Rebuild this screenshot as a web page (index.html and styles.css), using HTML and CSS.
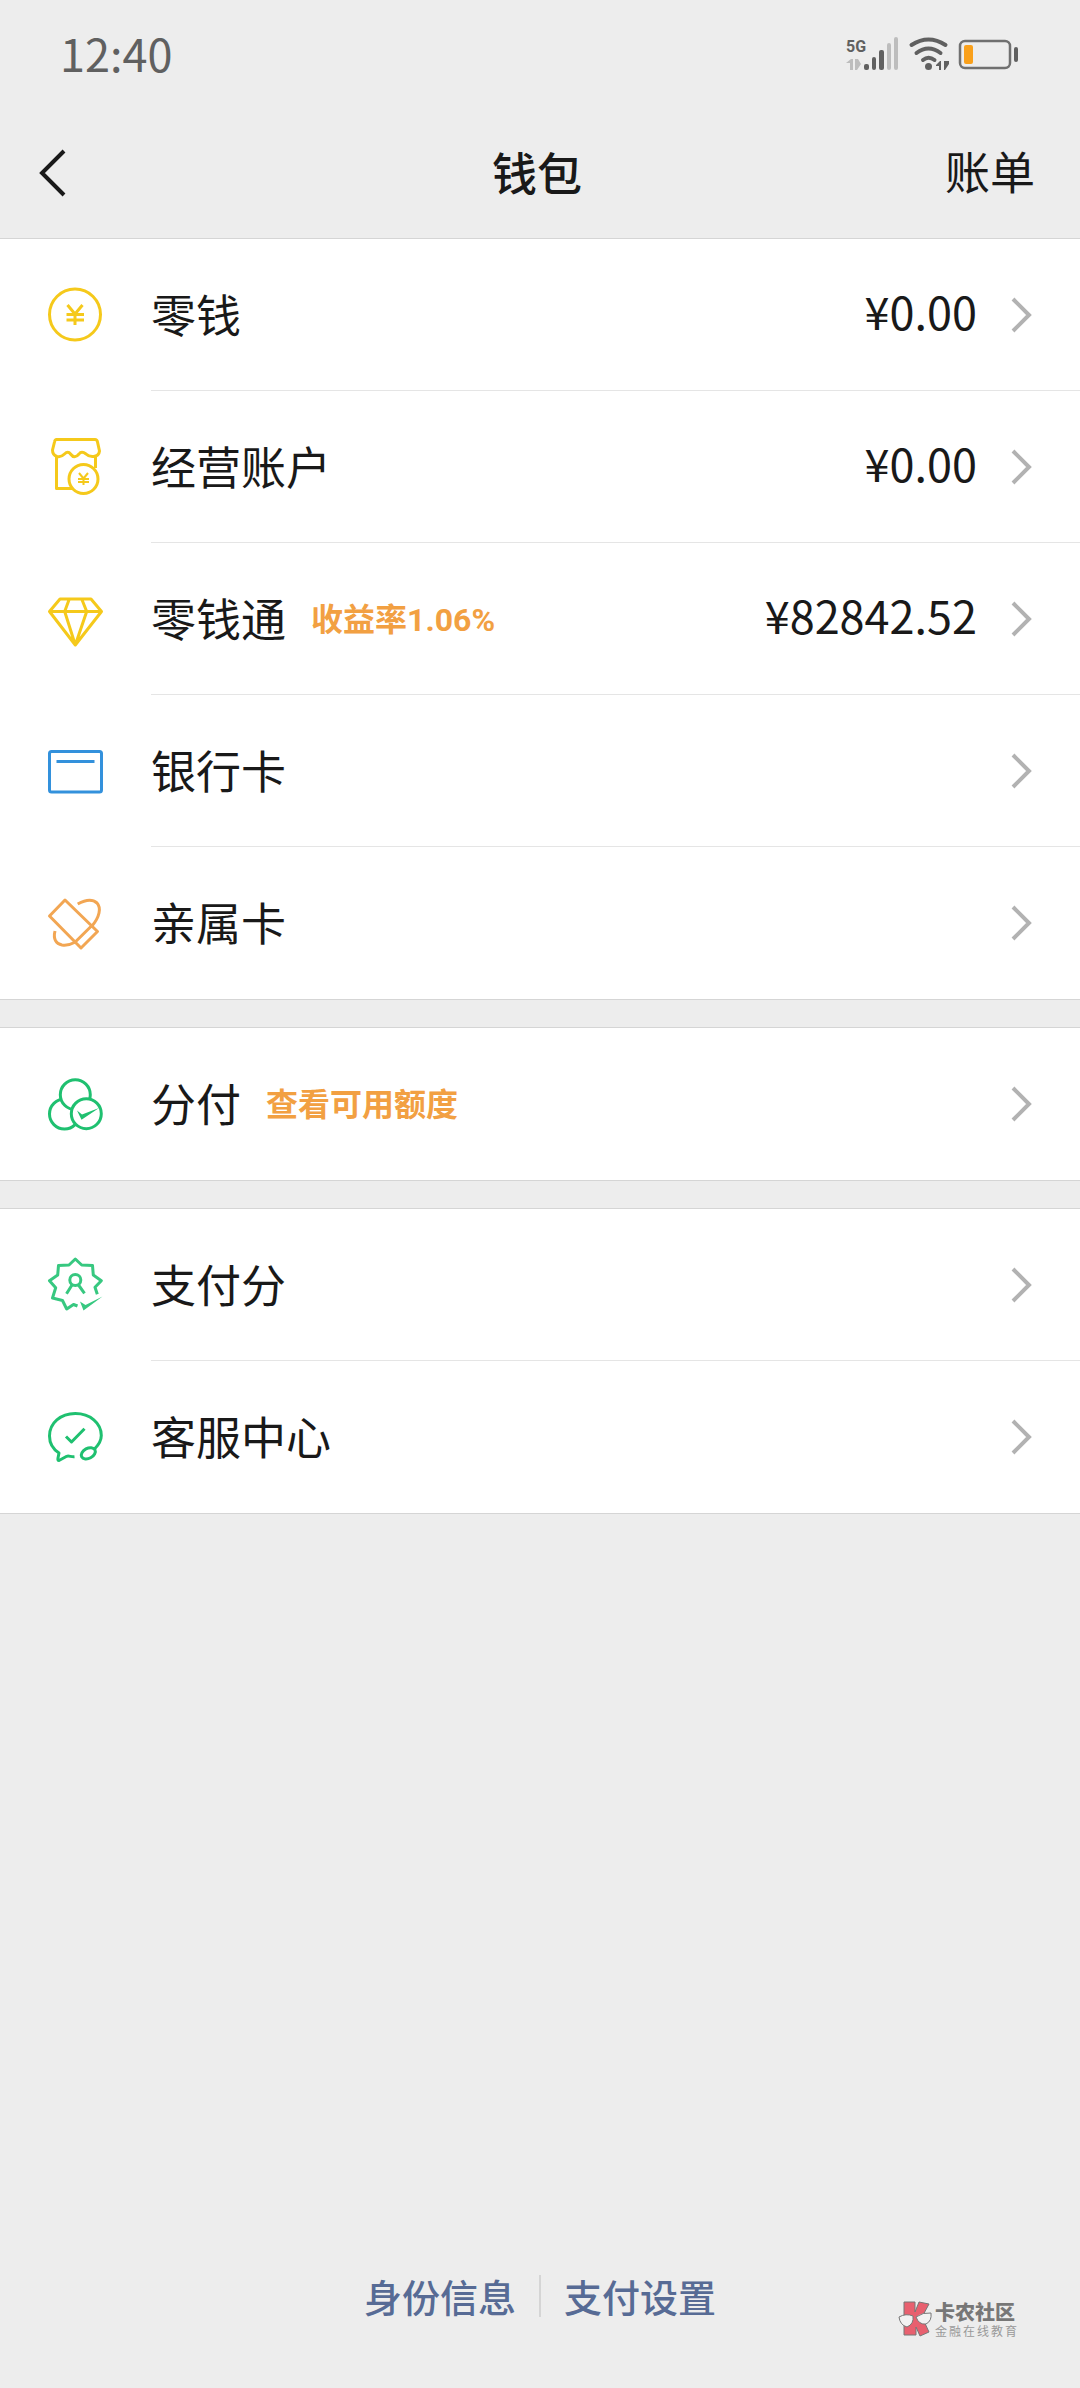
FILE: index.html
```html
<!DOCTYPE html>
<html lang="zh-CN">
<head>
  <meta charset="UTF-8" />
  <meta name="viewport" content="width=device-width, initial-scale=1.0"/>
  <title>钱包</title>
  <link rel="stylesheet" href="styles.css">
</head>
<body>
  <div class="status-bar">
    <span class="time">12:40</span>
    <svg class="status-icons" viewBox="0 0 174 38" aria-hidden="true">
      <text class="network" x="0" y="17">5G</text>
      <g fill="#bdbdbd">
        <path d="M0 28 L5 24 H7 V35 H4 V28 Z M9 24 H12 L15 29 L11 35 H9 Z"/>
        <rect x="41" y="8" width="4" height="27" rx="2"/>
        <rect x="48" y="2" width="4" height="33" rx="2"/>
      </g>
      <g fill="#606060">
        <rect x="18" y="29" width="5" height="6" rx="2"/>
        <rect x="26" y="22" width="4" height="13" rx="2"/>
        <rect x="33" y="15" width="5" height="20" rx="2"/>
        <circle cx="82.500" cy="31.500" r="3.500"/>
        <path d="M90 30 L94 26 H95 V35 H93 V31 H90 Z M98 26 H103 V29 L99 35 H98 Z"/>
        <rect x="168" y="12" width="4" height="15" rx="2"/>
      </g>
      <g fill="none" stroke="#606060" stroke-width="4" stroke-linecap="round">
        <path d="M65.500 10 Q82.500 -1 99.500 10"/>
        <path d="M70.500 18 Q82.500 9 94.500 18"/>
        <path d="M77 25 Q82.500 20.500 88.500 25"/>
      </g>
      <rect x="114" y="6" width="50" height="27" rx="5" fill="none" stroke="#707070" stroke-width="2.500"/>
      <rect x="118" y="10" width="9" height="19" rx="2" fill="#f9a01b"/>
    </svg>
  </div>

  <header class="nav">
    <button class="back" aria-label="返回">
      <svg viewBox="0 0 28 48"><path d="M25 2 L3 24 L25 46"/></svg>
    </button>
    <h1>钱包</h1>
    <a class="bill" href="#">账单</a>
  </header>

  <main>
    <ul class="section">
      <li>
        <a class="row yellow" href="#">
          <svg class="icon" viewBox="0 0 64 64">
            <circle cx="32" cy="31.500" r="25.500"/>
            <path d="M24.500 22 L32 31 L39.500 22 M32 31 V42 M23.500 31.500 H41 M23.500 37 H41"/>
          </svg>
          <span class="body">
            <span class="name">零钱</span>
            <span class="amount">¥0.00</span>
            <svg class="arrow" viewBox="0 0 24 40"><path d="M4 4 L20 20 L4 36"/></svg>
          </span>
        </a>
      </li>
      <li>
        <a class="row yellow" href="#">
          <svg class="icon" viewBox="0 0 64 64">
            <path d="M13.500 4.500 H52 Q54 4.500 54.500 7 L56.500 16 Q56 21 50.500 21.500 Q46 22 43 19 Q38.500 15.500 36 19 Q31.500 24.500 27.500 19 Q25 15.500 21.500 19 Q18 22.500 14 21.500 Q9.500 20 9.500 15 L11.500 7 Q12 4.500 13.500 4.500 Z"/>
            <path d="M13.500 22 V53.500 H29 M52.500 22 V33"/>
            <circle cx="40.500" cy="44" r="14.500" fill="#fff"/>
            <path class="thin" d="M36 38 L40.500 43.500 L45 38 M40.500 43.500 V50 M35 44 H46 M35 47 H46"/>
          </svg>
          <span class="body">
            <span class="name">经营账户</span>
            <span class="amount">¥0.00</span>
            <svg class="arrow" viewBox="0 0 24 40"><path d="M4 4 L20 20 L4 36"/></svg>
          </span>
        </a>
      </li>
      <li>
        <a class="row yellow" href="#">
          <svg class="icon" viewBox="0 0 64 64">
            <path d="M17 12 H48 L58.500 24.500 L32.300 58 L6.500 24.500 Z M6.500 24.500 H58.500 M26.300 12 L21.700 24.500 L32.300 58 L43.700 24.500 L38.700 12"/>
          </svg>
          <span class="body">
            <span class="name">零钱通</span>
            <span class="tip">收益率1.06%</span>
            <span class="amount">¥82842.52</span>
            <svg class="arrow" viewBox="0 0 24 40"><path d="M4 4 L20 20 L4 36"/></svg>
          </span>
        </a>
      </li>
      <li>
        <a class="row blue" href="#">
          <svg class="icon" viewBox="0 0 64 64">
            <rect x="6.500" y="12.500" width="52" height="40.500" rx="2"/>
            <path d="M13.500 22.500 H51.500"/>
          </svg>
          <span class="body">
            <span class="name">银行卡</span>
            <svg class="arrow" viewBox="0 0 24 40"><path d="M4 4 L20 20 L4 36"/></svg>
          </span>
        </a>
      </li>
      <li>
        <a class="row orange" href="#">
          <svg class="icon" viewBox="0 0 64 64">
            <path d="M22 9 L6.500 25 L38 57 L54.500 40.500 Z M48.700 34.700 L32 51.300"/>
            <path d="M34.700 13 C43 8.500 50 8.500 54 12 C58.500 17 56.500 26 49 35 M12 40 C10 48 13 53 19 54 C23 54.500 28 53.500 32 51.300"/>
          </svg>
          <span class="body">
            <span class="name">亲属卡</span>
            <svg class="arrow" viewBox="0 0 24 40"><path d="M4 4 L20 20 L4 36"/></svg>
          </span>
        </a>
      </li>
    </ul>

    <ul class="section">
      <li>
        <a class="row green" href="#">
          <svg class="icon" viewBox="0 0 64 64">
            <g fill="#fff">
              <circle cx="21.500" cy="42" r="15"/>
              <circle cx="32.300" cy="22.700" r="15"/>
              <circle cx="43.300" cy="41.700" r="15"/>
            </g>
            <path class="solid" d="M34 38.500 L39 42.500 L56 36 L38.500 47.700 Z"/>
          </svg>
          <span class="body">
            <span class="name">分付</span>
            <span class="tip">查看可用额度</span>
            <svg class="arrow" viewBox="0 0 24 40"><path d="M4 4 L20 20 L4 36"/></svg>
          </span>
        </a>
      </li>
    </ul>

    <ul class="section">
      <li>
        <a class="row green-light" href="#">
          <svg class="icon" viewBox="0 0 64 64">
            <path d="M34.500 53 L30.500 51.500 L23.700 56 L19.500 47.500 L9.500 45 L12.700 34.700 L6.500 27.700 L14.700 22 L15.500 12.500 L26 12 L32.300 6 L38.700 12 L49.500 12.500 L50.300 22 L58.300 27.700 L52 34.300 L54.300 41.300"/>
            <circle cx="32.300" cy="27" r="5.500"/>
            <path d="M29 32 L23.500 40.700 M35.500 32 L41.500 40.300"/>
            <path class="solid" d="M37 48.500 L42.500 52 L59.500 43.500 L40.500 57.500 Z"/>
          </svg>
          <span class="body">
            <span class="name">支付分</span>
            <svg class="arrow" viewBox="0 0 24 40"><path d="M4 4 L20 20 L4 36"/></svg>
          </span>
        </a>
      </li>
      <li>
        <a class="row green" href="#">
          <svg class="icon" viewBox="0 0 64 64">
            <path d="M31.500 51.700 C28 52 26 50.500 23.700 51.300 L16 55.500 Q14.500 55.500 15 53 L16 48 C9 43.500 6.500 37 6.500 31 C6.500 18 17.500 8.500 32.300 8.500 C47 8.500 58.300 18 58.300 30.500 C58.300 36 55.500 40 51.500 44"/>
            <ellipse cx="45.300" cy="48.300" rx="7.500" ry="5" transform="rotate(-28 45.300 48.300)"/>
            <path d="M23 31.500 L28.500 37 L41.500 23.700"/>
          </svg>
          <span class="body">
            <span class="name">客服中心</span>
            <svg class="arrow" viewBox="0 0 24 40"><path d="M4 4 L20 20 L4 36"/></svg>
          </span>
        </a>
      </li>
    </ul>
  </main>

  <footer class="footer">
    <a href="#">身份信息</a>
    <a href="#">支付设置</a>
  </footer>

  <div class="watermark">
    <svg class="logo" viewBox="0 0 36 38" aria-hidden="true">
      <path d="M6 2 H17 V12 L21 2 L31 4 L24 17 L31 32 L22 36 L18 27 V35 H6 Z" fill="#e8606f" stroke="#777" stroke-width="1"/>
      <g fill="#f2f2f2" stroke="#777" stroke-width="1">
        <path d="M1 17 Q8 13 15 16 Q16 24 9 27 Q2 25 1 17 Z"/>
        <path d="M18 17 Q25 12 33 13 Q34 21 28 24 Q21 25 18 17 Z"/>
      </g>
    </svg>
    <div>
      <div class="brand">卡农社区</div>
      <div class="slogan">金融在线教育</div>
    </div>
  </div>
</body>
</html>
```

FILE: styles.css
```css
* {
  box-sizing: border-box;
}

body {
  position: relative;
  display: flex;
  flex-direction: column;
  min-height: 100vh;
  margin: 0;
  background-color: #ededed;
  color: #191919;
  font-family: "Noto Sans CJK SC", sans-serif;
  font-size: 45px;
  line-height: 60px;
}

a {
  color: inherit;
  text-decoration: none;
}

/* status bar */
.status-bar {
  display: flex;
  align-items: center;
  justify-content: space-between;
  height: 108px;
  padding: 0 60px;
}

.time {
  padding-bottom: 2px;
  color: #606060;
}

.status-icons {
  width: 174px;
  height: 38px;
  overflow: visible;
}

.network {
  font-family: "Liberation Sans Narrow", Roboto, sans-serif;
  font-size: 16px;
  font-weight: bold;
  fill: #606060;
}

/* title bar */
.nav {
  display: grid;
  grid-template-columns: 1fr auto 1fr;
  align-items: center;
  height: 130px;
  padding: 0 45px 0 39px;
}

.nav h1 {
  margin: 0;
  padding-bottom: 2px;
  font-size: 45px;
  font-weight: 500;
}

.back {
  width: 28px;
  height: 48px;
  padding: 0;
  border: none;
  background: none;
  cursor: pointer;
}

.back svg {
  display: block;
  fill: none;
  stroke: #191919;
  stroke-width: 4;
}

.bill {
  justify-self: end;
  padding-bottom: 4px;
}

/* list */
.section {
  margin: 0 0 27px;
  padding: 0;
  list-style: none;
  background-color: #fff;
  border-top: 1px solid #d5d5d5;
  border-bottom: 1px solid #d5d5d5;
}

.row {
  display: flex;
  align-items: center;
  height: 152px;
  padding-left: 43px;
}

.icon {
  flex: none;
  width: 64px;
  height: 64px;
  margin-right: 44px;
  fill: none;
  stroke: currentColor;
  stroke-width: 3;
  stroke-linejoin: round;
}

.icon .thin {
  stroke-width: 2;
}

.icon .solid {
  fill: currentColor;
  stroke: none;
}

.body {
  display: flex;
  flex: 1;
  align-items: center;
  align-self: stretch;
  padding-right: 47px;
  border-bottom: 1px solid #e5e5e5;
  color: #191919;
}

li:last-child .body {
  border-bottom: none;
}

.name {
  padding-bottom: 2px;
}

.tip {
  padding-top: 2px;
  margin-left: 25px;
  color: #f2a042;
  font-family: Roboto, "Noto Sans CJK SC", sans-serif;
  font-size: 32px;
  font-weight: 700;
}

.amount {
  margin-left: auto;
  padding-bottom: 8px;
}

.arrow {
  width: 24px;
  height: 40px;
  margin-left: auto;
  fill: none;
  stroke: #b2b2b2;
  stroke-width: 4;
}

.amount + .arrow {
  margin-left: 32px;
}

.yellow {
  color: #f5c91b;
}

.blue {
  color: #3391dc;
}

.orange {
  color: #f2a653;
}

.green {
  color: #1fc070;
}

.green-light {
  color: #37c880;
}

/* bottom links */
.footer {
  display: flex;
  justify-content: center;
  margin-top: auto;
  padding-bottom: 71px;
  color: #576b95;
  font-size: 38px;
  font-weight: 500;
  line-height: 42px;
}

.footer a {
  padding: 0 23px;
}

.footer a + a {
  border-left: 2px solid #d5d5d5;
}

.watermark {
  position: absolute;
  right: 61px;
  bottom: 50px;
  display: flex;
  gap: 1px;
  color: #777;
}

.logo {
  width: 36px;
  height: 38px;
}

.brand {
  font-size: 20px;
  font-weight: 900;
  line-height: 24px;
}

.slogan {
  color: #999;
  font-size: 12px;
  line-height: 14px;
  letter-spacing: 2px;
}
```
